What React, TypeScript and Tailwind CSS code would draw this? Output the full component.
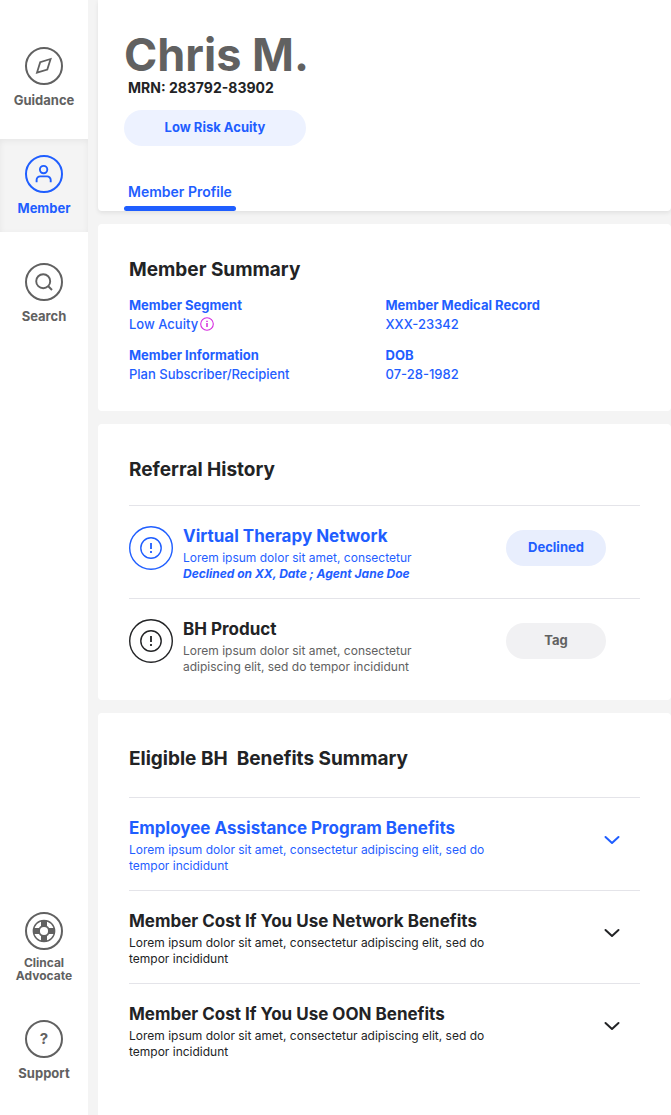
import type { ReactNode } from "react";
import { useState } from "react";

function Compass() {
  return (
    <svg width="18" height="18" viewBox="0 0 18 18" fill="none" stroke="currentColor" strokeWidth="1.8" strokeLinejoin="miter">
      <path d="M15.6 2 12.3 12.6 2 15.6 5.2 5.2Z" />
    </svg>
  );
}

function Person() {
  return (
    <svg width="18" height="20" viewBox="0 0 18 20" fill="none" stroke="currentColor" strokeWidth="1.9">
      <circle cx="8.6" cy="5.6" r="3.7" />
      <path d="M1.6 18.2v-2.2a3.6 3.6 0 0 1 3.6-3.6h6.9a3.6 3.6 0 0 1 3.6 3.6v2.2" />
    </svg>
  );
}

function Magnifier() {
  return (
    <svg width="18" height="18" viewBox="0 0 18 18" fill="none" stroke="currentColor" strokeWidth="1.9">
      <circle cx="8.2" cy="8.2" r="7" />
      <path d="m13 13 4 4" />
    </svg>
  );
}

function Lifebuoy() {
  return (
    <svg width="24" height="24" viewBox="0 0 24 24" fill="none" stroke="currentColor">
      <circle cx="12" cy="12" r="10.6" strokeWidth="1.5" />
      <path d="M12 1.2v6.4M12 16.4v6.4M1.2 12h6.4M16.4 12h6.4" strokeWidth="6" />
      <circle cx="12" cy="12" r="5" strokeWidth="1.9" />
    </svg>
  );
}

function Alert() {
  return (
    <svg width="44" height="44" viewBox="0 0 44 44" fill="none" stroke="currentColor" className="shrink-0">
      <circle cx="22" cy="22" r="21.3" strokeWidth="1.4" />
      <circle cx="22" cy="22" r="10.2" strokeWidth="1.4" />
      <path d="M22 17v6M22 25v2" strokeWidth="1.8" />
    </svg>
  );
}

function Info() {
  return (
    <svg width="14" height="14" viewBox="0 0 14 14" fill="none" stroke="currentColor" className="text-[#d62be0]">
      <circle cx="7" cy="7" r="6.3" strokeWidth="1.1" />
      <path d="M7 6v4M7 3.8v1.3" strokeWidth="1.5" />
    </svg>
  );
}

function Chevron({ open }: { open: boolean }) {
  return (
    <svg
      width="24"
      height="24"
      viewBox="0 0 24 24"
      fill="none"
      stroke="currentColor"
      strokeWidth="2"
      strokeLinecap="round"
      strokeLinejoin="round"
      className={open ? "mt-2.5 shrink-0 rotate-180" : "mt-2.5 shrink-0"}
    >
      <path d="m5.5 9 6.5 6 6.5-6" />
    </svg>
  );
}

function NavItem({ icon, label, className }: { icon: ReactNode; label: string; className: string }) {
  return (
    <a href="#" className={`flex flex-col items-center text-center font-bold ${className}`}>
      <span className="flex size-[38px] shrink-0 items-center justify-center rounded-full border-2 border-current">
        {icon}
      </span>
      {label}
    </a>
  );
}

function Field({ label, children }: { label: string; children: ReactNode }) {
  return (
    <div className="text-[13px]">
      <dt className="font-bold leading-[18px]">{label}</dt>
      <dd className="flex items-center gap-0.5 font-medium leading-5">{children}</dd>
    </div>
  );
}

function Card({ title, className, children }: { title: string; className: string; children: ReactNode }) {
  return (
    <section className={`bg-white px-[31px] pt-[33px] ${className}`}>
      <h2 className="whitespace-pre text-[19px] font-bold leading-[26px] text-[#222325]">{title}</h2>
      {children}
    </section>
  );
}

const benefits = [
  { title: "Employee Assistance Program Benefits", color: "text-[#1f5eff]" },
  { title: "Member Cost If You Use Network Benefits", color: "text-[#222325]" },
  { title: "Member Cost If You Use OON Benefits", color: "text-[#222325]" },
];

function Benefit({ title, color }: { title: string; color: string }) {
  const [open, setOpen] = useState(false);
  return (
    <li className="border-t border-[#e4e4e9]">
      <button
        type="button"
        aria-expanded={open}
        onClick={() => setOpen(!open)}
        className={`flex w-full items-start justify-between pb-4 pr-4 pt-5 text-left ${color}`}
      >
        <span className="flex max-w-[370px] flex-col gap-1">
          <span className="text-[17px] font-bold leading-5">{title}</span>
          <span className="text-xs leading-4">
            Lorem ipsum dolor sit amet, consectetur adipiscing elit, sed do tempor incididunt
          </span>
        </span>
        <Chevron open={open} />
      </button>
    </li>
  );
}

export default function App() {
  return (
    <div className="flex min-h-screen gap-2.5 bg-[#f4f4f4] font-['Inter',sans-serif]">
      <nav className="flex w-[88px] shrink-0 flex-col bg-white text-[#616161]">
        <NavItem icon={<Compass />} label="Guidance" className="gap-[7px] pb-[31px] pt-[47px] text-[13px] leading-4" />
        <NavItem
          icon={<Person />}
          label="Member"
          className="gap-[7px] bg-[#f4f4f4] py-4 text-[13px] leading-4 text-[#1f5eff] shadow-[inset_0_2px_6px_rgba(0,0,0,0.06)]"
        />
        <NavItem icon={<Magnifier />} label="Search" className="gap-[7px] pt-[31px] text-[13px] leading-4" />
        <div className="mt-auto flex flex-col gap-[38px] pb-[34px] pt-8">
          <NavItem icon={<Lifebuoy />} label="Clincal Advocate" className="gap-1.5 px-3 text-xs leading-[13px]" />
          <NavItem
            icon={<span className="text-[15px]">?</span>}
            label="Support"
            className="gap-[7px] text-[13px] leading-4"
          />
        </div>
      </nav>

      <main className="flex min-w-0 flex-1 flex-col gap-[13px]">
        <header className="rounded-b bg-white px-[26px] pt-[30px] shadow-[0_2px_4px_rgba(0,0,0,0.08)]">
          <h1 className="text-[45px] font-bold leading-[50px] text-[#616161]">Chris M.</h1>
          <p className="pl-1 text-sm font-bold leading-4 text-[#222325]">MRN: 283792-83902</p>
          <div className="mt-3.5 flex h-9 w-[182px] items-center justify-center rounded-full bg-[#edf2ff] text-[13px] font-bold text-[#1f5eff]">
            Low Risk Acuity
          </div>
          <div className="mt-9 flex">
            <a href="#" className="flex flex-col gap-1 text-sm font-semibold leading-5 text-[#1f5eff]">
              <span className="px-1">Member Profile</span>
              <span className="h-[5px] rounded-full bg-[#1f5eff]" />
            </a>
          </div>
        </header>

        <Card title="Member Summary" className="rounded pb-[27px]">
          <dl className="mt-[13px] grid grid-cols-2 gap-x-0.5 gap-y-3 text-[#1f5eff]">
            <Field label="Member Segment">
              Low Acuity <Info />
            </Field>
            <Field label="Member Medical Record">XXX-23342</Field>
            <Field label="Member Information">Plan Subscriber/Recipient</Field>
            <Field label="DOB">07-28-1982</Field>
          </dl>
        </Card>

        <Card title="Referral History" className="rounded pb-[9px]">
          <ul className="mt-[22px]">
            <li className="flex items-start gap-2.5 border-t border-[#e4e4e9] pb-4 pr-[34px] pt-5 text-[#1f5eff]">
              <Alert />
              <div className="flex max-w-[250px] flex-1 flex-col gap-1">
                <h3 className="text-[17px] font-bold leading-5">Virtual Therapy Network</h3>
                <p className="text-xs leading-4">
                  Lorem ipsum dolor sit amet, consectetur
                  <em className="block font-bold">Declined on XX, Date ; Agent Jane Doe</em>
                </p>
              </div>
              <span className="ml-auto mt-1 flex h-9 w-[100px] items-center justify-center rounded-full bg-[#e8eefd] text-[13px] font-bold">
                Declined
              </span>
            </li>
            <li className="flex items-start gap-2.5 border-t border-[#e4e4e9] pb-4 pr-[34px] pt-5 text-[#222325]">
              <Alert />
              <div className="flex max-w-[250px] flex-1 flex-col gap-1">
                <h3 className="text-[17px] font-bold leading-5">BH Product</h3>
                <p className="text-xs leading-4 text-[#616161]">
                  Lorem ipsum dolor sit amet, consectetur adipiscing elit, sed do tempor incididunt
                </p>
              </div>
              <span className="ml-auto mt-1 flex h-9 w-[100px] items-center justify-center rounded-full bg-[#f1f1f3] text-[13px] font-bold text-[#616161]">
                Tag
              </span>
            </li>
          </ul>
        </Card>

        <Card title="Eligible BH  Benefits Summary" className="flex-1 rounded-t pb-8">
          <ul className="mt-[25px]">
            {benefits.map((benefit) => (
              <Benefit key={benefit.title} title={benefit.title} color={benefit.color} />
            ))}
          </ul>
        </Card>
      </main>
    </div>
  );
}
